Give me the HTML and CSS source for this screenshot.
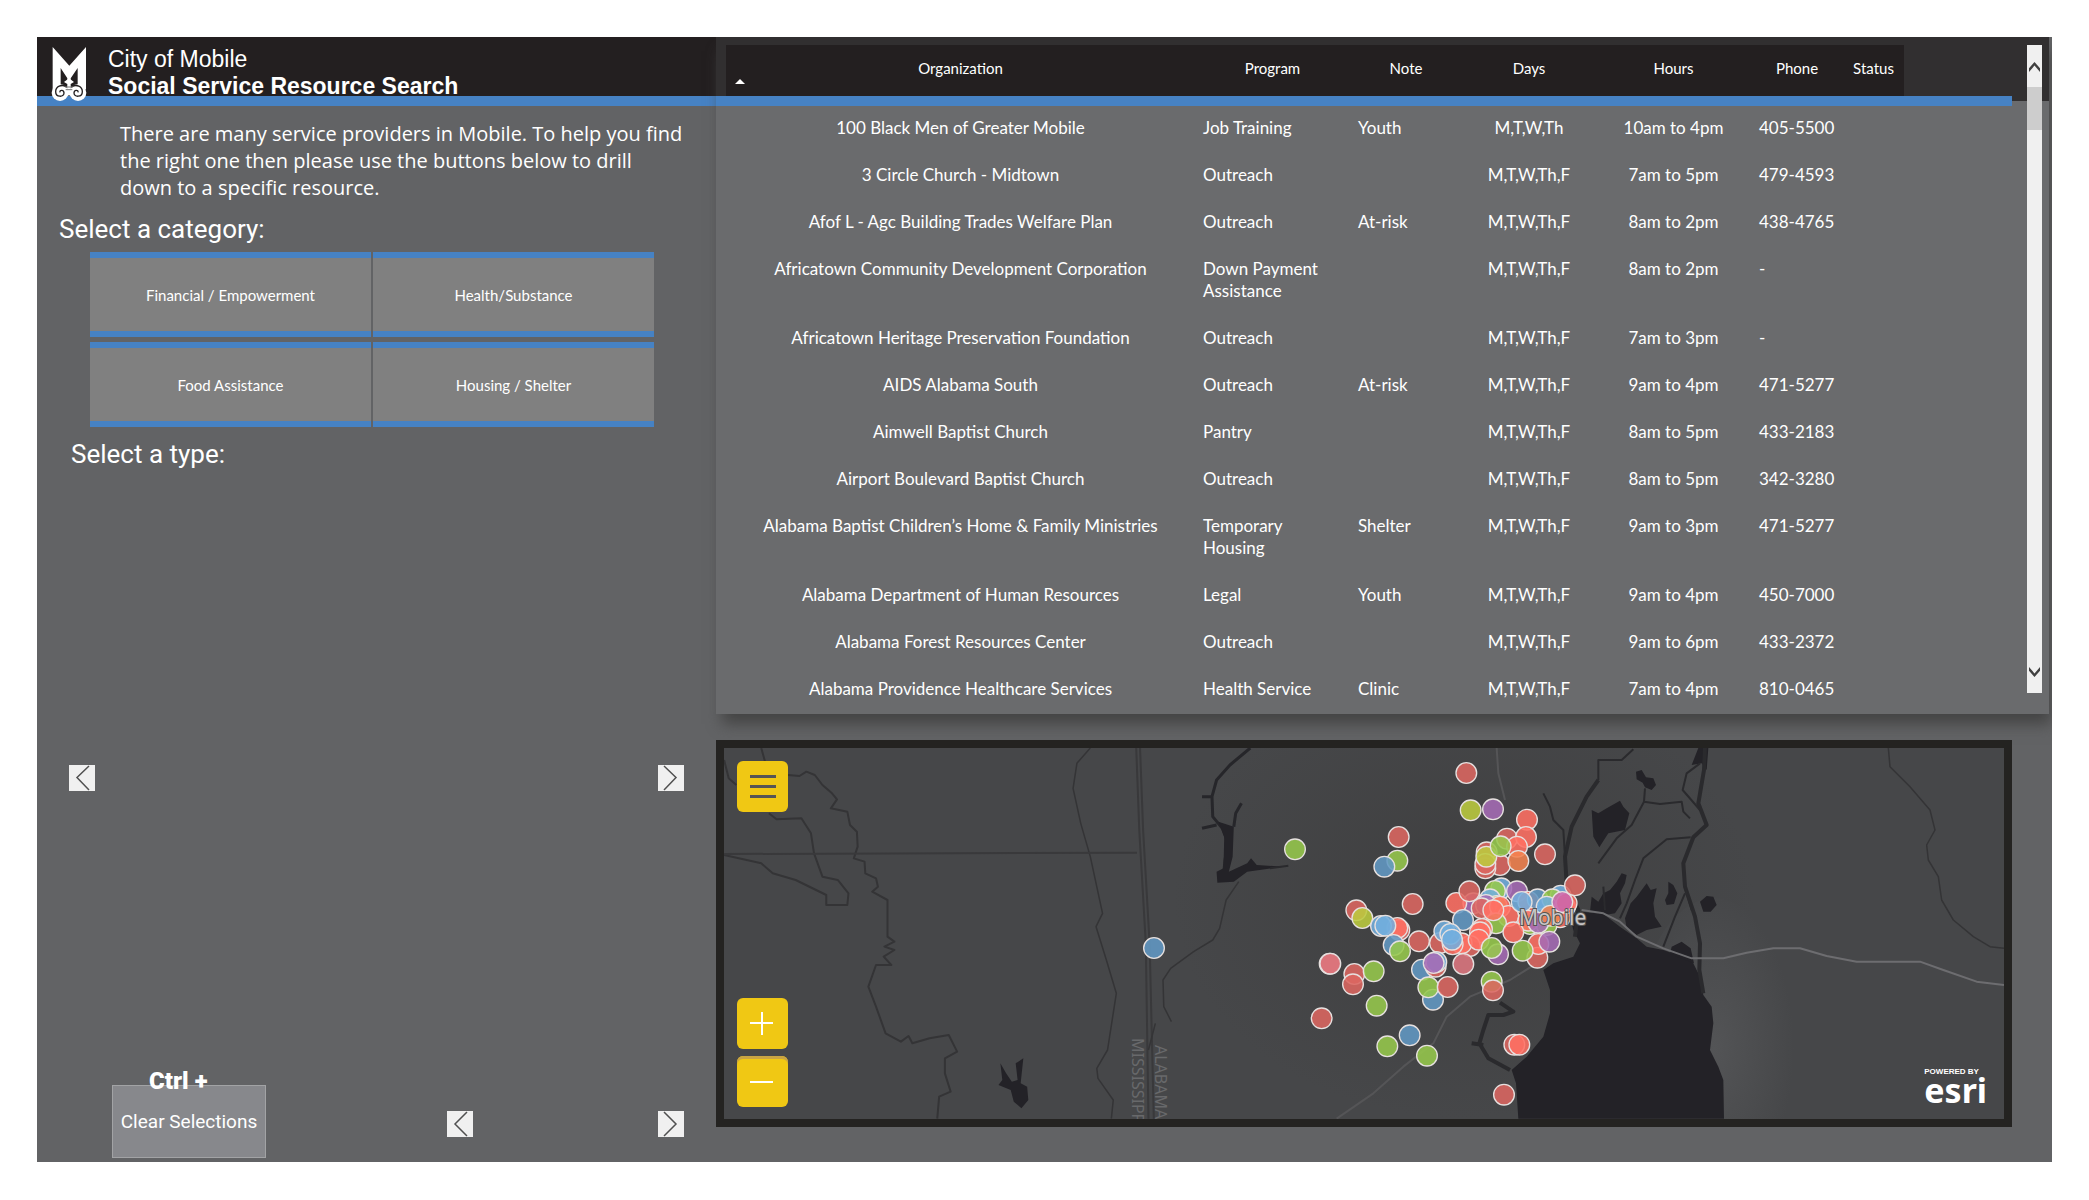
FILE: index.html
```html
<!DOCTYPE html>
<html lang="en">
<head>
<meta charset="utf-8">
<meta name="viewport" content="width=device-width, initial-scale=1">
<title>City of Mobile - Social Service Resource Search</title>
<link rel="stylesheet" href="styles.css">
</head>
<body>
<div class="dashboard">
  <div class="sidebar">
    <header class="brand">
      <svg class="brand-logo" viewBox="0 0 108 168" aria-hidden="true">
        <path fill="#fff" d="M5 3 55 59 105 3V130H5Z"/>
        <path fill="#231f20" d="M29 66 54 104 80 66V128H29Z"/>
        <circle cx="27" cy="140" r="25" fill="#fff"/>
        <circle cx="81" cy="140" r="25" fill="#fff"/>
        <path fill="#fff" d="M54 88 60 101 69 108 59 114 60 140 66 152 54 148 42 152 48 140 49 114 39 108 48 101Z"/>
        <path fill="none" stroke="#231f20" stroke-width="4" d="M45 122C32 114 14 121 14 137 14 154 39 155 39 141 39 131 25 131 27 139M63 122C76 114 94 121 94 137 94 154 69 155 69 141 69 131 83 131 81 139"/>
        <path stroke="#777" stroke-width="3" d="M42 123H66M44 131H64"/>
      </svg>
      <h1 class="brand-title">City of Mobile<strong>Social Service Resource Search</strong></h1>
    </header>
    <p class="intro">There are many service providers in Mobile. To help you find the right one then please use the buttons below to drill down to a specific resource.</p>
    <h2 class="heading">Select a category:</h2>
    <div class="categories">
      <button class="category" type="button">Financial / Empowerment</button>
      <button class="category" type="button">Health/Substance</button>
      <button class="category" type="button">Food Assistance</button>
      <button class="category" type="button">Housing / Shelter</button>
    </div>
    <h2 class="heading heading-type">Select a type:</h2>
    <div class="type-list"></div>
    <div class="pager">
      <button class="arrow" type="button" aria-label="Previous types"><svg viewBox="0 0 26 26"><path d="M20 1 8 12.500 20 25"/></svg></button>
      <button class="arrow" type="button" aria-label="Next types"><svg viewBox="0 0 26 26"><path d="M6 1 18 12.500 6 25"/></svg></button>
    </div>
    <div class="detail-list"></div>
    <div class="actions">
      <div class="clear">
        <span class="shortcut">Ctrl +</span>
        <button class="clear-button" type="button">Clear Selections</button>
      </div>
      <div class="pager pager-detail">
        <button class="arrow" type="button" aria-label="Previous"><svg viewBox="0 0 26 26"><path d="M20 1 8 13 20 25"/></svg></button>
        <button class="arrow" type="button" aria-label="Next"><svg viewBox="0 0 26 26"><path d="M6 1 18 13 6 25"/></svg></button>
      </div>
    </div>
  </div>

  <main class="content">
    <section class="results">
      <div class="results-body">
        <table class="results-table">
          <colgroup><col><col class="col-program"><col class="col-note"><col class="col-days"><col class="col-hours"><col class="col-phone"><col class="col-status"></colgroup>
          <thead>
            <tr><th aria-sort="ascending" class="sorted">Organization</th><th>Program</th><th>Note</th><th>Days</th><th>Hours</th><th>Phone</th><th>Status</th></tr>
          </thead>
          <tbody>
            <tr><td>100 Black Men of Greater Mobile</td><td>Job Training</td><td>Youth</td><td>M,T,W,Th</td><td>10am to 4pm</td><td>405-5500</td><td></td></tr>
            <tr><td>3 Circle Church - Midtown</td><td>Outreach</td><td></td><td>M,T,W,Th,F</td><td>7am to 5pm</td><td>479-4593</td><td></td></tr>
            <tr><td>Afof L - Agc Building Trades Welfare Plan</td><td>Outreach</td><td>At-risk</td><td>M,T,W,Th,F</td><td>8am to 2pm</td><td>438-4765</td><td></td></tr>
            <tr><td>Africatown Community Development Corporation</td><td>Down Payment Assistance</td><td></td><td>M,T,W,Th,F</td><td>8am to 2pm</td><td>-</td><td></td></tr>
            <tr><td>Africatown Heritage Preservation Foundation</td><td>Outreach</td><td></td><td>M,T,W,Th,F</td><td>7am to 3pm</td><td>-</td><td></td></tr>
            <tr><td>AIDS Alabama South</td><td>Outreach</td><td>At-risk</td><td>M,T,W,Th,F</td><td>9am to 4pm</td><td>471-5277</td><td></td></tr>
            <tr><td>Aimwell Baptist Church</td><td>Pantry</td><td></td><td>M,T,W,Th,F</td><td>8am to 5pm</td><td>433-2183</td><td></td></tr>
            <tr><td>Airport Boulevard Baptist Church</td><td>Outreach</td><td></td><td>M,T,W,Th,F</td><td>8am to 5pm</td><td>342-3280</td><td></td></tr>
            <tr><td>Alabama Baptist Children’s Home &amp; Family Ministries</td><td>Temporary Housing</td><td>Shelter</td><td>M,T,W,Th,F</td><td>9am to 3pm</td><td>471-5277</td><td></td></tr>
            <tr><td>Alabama Department of Human Resources</td><td>Legal</td><td>Youth</td><td>M,T,W,Th,F</td><td>9am to 4pm</td><td>450-7000</td><td></td></tr>
            <tr><td>Alabama Forest Resources Center</td><td>Outreach</td><td></td><td>M,T,W,Th,F</td><td>9am to 6pm</td><td>433-2372</td><td></td></tr>
            <tr><td>Alabama Providence Healthcare Services</td><td>Health Service</td><td>Clinic</td><td>M,T,W,Th,F</td><td>7am to 4pm</td><td>810-0465</td><td></td></tr>
          </tbody>
        </table>
      </div>
      <div class="scroll-side">
        <div class="scrollbar">
          <button class="scroll-button" type="button" aria-label="Scroll up"><svg viewBox="0 0 12 12"><path d="M0 8 6 1 12 8V12L6 5 0 12Z"/></svg></button>
          <div class="scroll-thumb"></div>
          <button class="scroll-button scroll-down" type="button" aria-label="Scroll down"><svg viewBox="0 0 12 12"><path d="M0 4 6 11 12 4V0L6 7 0 0Z"/></svg></button>
        </div>
      </div>
    </section>

    <section class="map" aria-label="Map of service providers">
      <svg class="map-canvas" viewBox="0 0 1280 371" preserveAspectRatio="xMidYMid slice">
        <defs>
          <radialGradient id="land"><stop offset="0" stop-color="#3f3f40"/><stop offset="1" stop-color="#464749"/></radialGradient>
          <radialGradient id="shore"><stop offset="0" stop-color="#535456"/><stop offset="1" stop-color="#464749"/></radialGradient>
        </defs>
        <rect width="1280" height="371" fill="#464749"/>
        <ellipse cx="740" cy="150" rx="290" ry="220" fill="url(#land)"/>
        <ellipse cx="990" cy="300" rx="80" ry="150" fill="url(#shore)"/>

        <g class="west" transform="translate(-24 -18) scale(.38265 .33333)">
          <path class="creek" d="M160 54 170 95M230 135 260 138 278 125 300 135 320 165 345 190 358 208 342 235 385 245 392 285 410 305 412 350 402 385 430 395 432 430 460 445 465 470 450 485 490 510 490 620 508 635 482 650 508 660 480 680 500 705 460 705 440 770 460 830 485 910 525 935 545 918 555 940 600 925 650 915 672 965 640 985 640 1030 655 1085 625 1100 620 1166"/>
          <path class="creek" d="M63 90 75 145 95 165M180 250 200 268 265 265 290 310 298 370 320 440 360 450 388 490 385 525 330 525 330 495 250 450 190 430 160 400 63 375"/>
          <path class="creek fine" d="M1020 54 985 100 975 175 995 280 1020 380 1052 550 1035 590 1062 690 1088 790 1065 960 1037 1015 1040 1045 1080 1110 1075 1166"/>
          <path class="border" d="M63 372 1142 368M1140 54 1148 300 1165 640 1172 1166M1150 54 1158 300 1175 640 1186 1166"/>
          <path class="creek fine" d="M1408 455 1375 510 1358 595 1340 630 1290 665 1230 715 1210 750 1212 830 1232 875M1190 880 1172 960"/>
          <path class="river" d="M1438 54 1385 105 1350 150 1338 200 1340 260 1365 295 1380 340 1372 390 1368 440M1395 290 1400 250 1415 220M1312 200H1338M1312 295 1350 285"/>
          <path class="lake" d="M1355 275 1395 290 1392 380 1382 425 1430 400 1440 385 1455 405 1525 410 1430 425 1395 455 1352 458 1350 425 1368 415 1370 320Z"/>
          <path class="lake" d="M785 1000 800 1030 815 1055 830 1050 825 1000 845 985 838 1060 855 1070 858 1110 840 1135 820 1115 812 1080 780 1065 790 1050Z"/>
        </g>

        <g transform="translate(546 -18) scale(.33333)">
          <path class="water" d="M900 560 935 545 1000 552 1050 590 1100 625 1130 650 1180 660 1265 690 1290 740 1300 795 1325 830 1330 880 1320 960 1345 1010 1360 1050 1362 1166H745L738 1060 725 1020 770 980 820 920 840 850 840 780 820 720 850 700 910 680 930 640 910 600Z"/>
          <path class="water" d="M965 240 985 250 1010 235 1050 212 1060 230 1078 250 1065 300 1015 310 988 352 970 320ZM1098 125 1115 120 1128 142 1150 145 1158 165 1145 180 1125 172 1118 158 1100 148Z"/>
          <path class="water" d="M965 500 985 515 1000 490 1020 480 1040 455 1055 430 1070 435 1065 460 1050 490 1055 520 1035 550 1000 556 960 545ZM1065 565 1082 520 1100 500 1130 460 1142 480 1160 475 1150 520 1155 560 1175 590 1130 600 1100 615 1070 595ZM1195 455 1210 465 1222 490 1212 522 1190 525 1185 510 1195 490ZM1290 515 1310 498 1330 500 1340 525 1322 545 1300 545ZM1205 650 1235 635 1262 655 1272 700 1200 672ZM1285 54H1315L1310 120 1295 100 1265 105Z"/>
          <path class="channel thick" d="M1305 54 1302 120 1285 220 1310 285 1270 322 1240 400 1245 470 1275 560 1290 640 1288 720 1300 790M985 150 950 200 905 290 885 380 890 460 925 540 915 620"/>
          <path class="channel" d="M1290 100 1250 130 1238 180 1290 240M1125 175 1122 215 1170 222 1235 215 1240 245 1260 265M1122 215 1085 285 1040 325 985 400M1262 322 1190 328 1120 385 1095 450 1070 520 1050 565M1090 58 1055 90H985V150M820 190 840 230 850 270 880 300 885 380M1245 490 1215 560 1180 650M0 415 55 407M1000 470 1005 540M1245 470 1265 540"/>
          <path class="channel thick" d="M690 818 730 845 700 855 655 855 640 900 628 940 655 985 720 1020M605 940 640 945"/>
          <path class="road" d="M935 540 1000 550 1050 575 1100 620 1180 655 1265 685H1360L1430 668 1510 655 1590 655 1670 678 1760 695H1950L2020 720 2120 755 2202 765"/>
          <path class="road faint" d="M800 700 720 750 600 800 530 860 490 940 400 1010 310 1090 200 1166M680 54 685 130 705 210"/>
          <path class="creek fine" d="M1855 54 1860 110 1920 170 1980 240 1995 300 1970 345 1975 390 2005 440 2015 510 2050 570 2110 620 2160 650 2202 655"/>

          <g class="pins">
            <circle class="red" cx="589" cy="129" r="31"/><circle class="lime" cx="602" cy="241" r="31"/><circle class="purple" cx="669" cy="238" r="31"/>
            <circle class="coral" cx="771" cy="269" r="31"/><circle class="red" cx="711" cy="326" r="31"/><circle class="coral" cx="768" cy="321" r="31"/>
            <circle class="coral" cx="741" cy="350" r="31"/><circle class="red" cx="650" cy="367" r="31"/><circle class="red" cx="690" cy="405" r="31"/>
            <circle class="red" cx="646" cy="415" r="31"/><circle class="red" cx="646" cy="402" r="31"/><circle class="lime" cx="649" cy="380" r="31"/>
            <circle class="green" cx="692" cy="349" r="31"/><circle class="orange" cx="745" cy="393" r="31"/><circle class="red" cx="825" cy="373" r="31"/>
            <circle class="red" cx="386" cy="321" r="31"/><circle class="green" cx="382" cy="392" r="31"/><circle class="blue" cx="343" cy="410" r="31"/>
            <circle class="green" cx="75" cy="358" r="31"/><circle class="red" cx="428" cy="522" r="31"/><circle class="red" cx="259" cy="541" r="31"/>
            <circle class="lime" cx="277" cy="564" r="31"/><circle class="purple" cx="610" cy="520" r="31"/><circle class="coral" cx="559" cy="519" r="31"/>
            <circle class="red" cx="598" cy="484" r="31"/><circle class="sky" cx="694" cy="475" r="31"/><circle class="green" cx="675" cy="483" r="31"/>
            <circle class="purple" cx="741" cy="484" r="31"/><circle class="sky" cx="660" cy="508" r="31"/><circle class="lime" cx="680" cy="528" r="31"/>
            <circle class="purple" cx="648" cy="525" r="31"/><circle class="red" cx="635" cy="535" r="31"/><circle class="coral" cx="690" cy="530" r="31"/>
            <circle class="coral" cx="715" cy="558" r="31"/><circle class="green" cx="678" cy="580" r="31"/><circle class="coral" cx="670" cy="541" r="31"/>
            <circle class="coral" cx="775" cy="515" r="31"/><circle class="blue" cx="803" cy="508" r="31"/><circle class="sky" cx="755" cy="516" r="31"/>
            <circle class="sky" cx="872" cy="497" r="31"/><circle class="green" cx="847" cy="508" r="31"/><circle class="sky" cx="830" cy="530" r="31"/>
            <circle class="coral" cx="885" cy="530" r="31"/><circle class="coral" cx="870" cy="562" r="31"/><circle class="green" cx="780" cy="582" r="31"/>
            <circle class="green" cx="830" cy="585" r="31"/><circle class="coral" cx="775" cy="572" r="31"/><circle class="purple" cx="805" cy="578" r="31"/>
            <circle class="coral" cx="890" cy="520" r="31"/><circle class="orange" cx="842" cy="557" r="31"/><circle class="pink" cx="877" cy="516" r="31"/>
            <circle class="red" cx="915" cy="466" r="31"/><circle class="red" cx="802" cy="683" r="31"/><circle class="coral" cx="805" cy="642" r="31"/>
            <circle class="purple" cx="838" cy="635" r="31"/><circle class="green" cx="758" cy="662" r="31"/><circle class="coral" cx="730" cy="607" r="31"/>
            <circle class="coral" cx="636" cy="597" r="31"/><circle class="coral" cx="630" cy="607" r="31"/><circle class="blue" cx="579" cy="570" r="31"/>
            <circle class="red" cx="600" cy="648" r="31"/><circle class="coral" cx="575" cy="640" r="31"/><circle class="red" cx="510" cy="639" r="31"/>
            <circle class="coral" cx="548" cy="643" r="31"/><circle class="sky" cx="523" cy="604" r="31"/><circle class="sky" cx="541" cy="612" r="31"/>
            <circle class="sky" cx="546" cy="629" r="31"/><circle class="coral" cx="626" cy="629" r="31"/><circle class="purple" cx="684" cy="673" r="31"/>
            <circle class="green" cx="665" cy="654" r="31"/><circle class="red" cx="447" cy="634" r="31"/><circle class="red" cx="388" cy="600" r="31"/>
            <circle class="coral" cx="382" cy="594" r="31"/><circle class="sky" cx="333" cy="588" r="31"/><circle class="sky" cx="346" cy="587" r="31"/>
            <circle class="blue" cx="371" cy="645" r="31"/><circle class="green" cx="390" cy="664" r="31"/><circle class="red" cx="179" cy="701" r="31"/>
            <circle class="rose" cx="181" cy="701" r="31"/><circle class="red" cx="253" cy="732" r="31"/><circle class="red" cx="249" cy="763" r="31"/>
            <circle class="green" cx="311" cy="724" r="31"/><circle class="green" cx="320" cy="827" r="31"/><circle class="red" cx="155" cy="865" r="31"/>
            <circle class="blue" cx="456" cy="719" r="31"/><circle class="red" cx="497" cy="710" r="31"/><circle class="sky" cx="499" cy="696" r="31"/>
            <circle class="purple" cx="491" cy="699" r="31"/><circle class="rose" cx="580" cy="702" r="31"/><circle class="blue" cx="489" cy="809" r="31"/>
            <circle class="green" cx="475" cy="772" r="31"/><circle class="red" cx="533" cy="771" r="31"/><circle class="green" cx="665" cy="755" r="31"/>
            <circle class="red" cx="669" cy="781" r="31"/><circle class="blue" cx="419" cy="916" r="31"/><circle class="green" cx="352" cy="949" r="31"/>
            <circle class="green" cx="471" cy="977" r="31"/><circle class="red" cx="733" cy="944" r="31"/><circle class="coral" cx="748" cy="944" r="31"/>
            <circle class="red" cx="702" cy="1094" r="31"/><circle class="blue" cx="-348" cy="654" r="31"/>
          </g>
        </g>
        <text class="city" x="795" y="177">Mobile</text>
        <text class="state" transform="translate(408 290) rotate(90)">MISSISSIPPI</text>
        <text class="state" transform="translate(431 297) rotate(90)">ALABAMA</text>
      </svg>
      <button class="map-button map-menu" type="button" aria-label="Menu"><svg viewBox="0 0 51 51"><path d="M13 15.500H39M13 25.500H39M13 35.500H39"/></svg></button>
      <div class="map-zoom">
        <button class="map-button" type="button" aria-label="Zoom in"><svg viewBox="0 0 51 51"><path d="M13 25H36M25 14V37"/></svg></button>
        <button class="map-button zoom-out" type="button" aria-label="Zoom out"><svg viewBox="0 0 51 51"><path d="M13 26H36"/></svg></button>
      </div>
      <a class="esri" href="#"><small>POWERED BY</small>esri</a>
    </section>
  </main>
</div>
</body>
</html>
```

FILE: styles.css
```css
* {
  box-sizing: border-box;
}

body {
  margin: 0;
  padding: 37px;
  background: #fff;
  color: #fff;
  font-family: Lato, "Liberation Sans", sans-serif;
}

button {
  margin: 0;
  padding: 0;
  border: 0;
  color: inherit;
  font: inherit;
  cursor: pointer;
}

.dashboard {
  display: grid;
  grid-template-columns: 679fr 1336fr;
  min-height: calc(100vh - 75px);
  background: #626365;
  overflow: hidden;
}

/* Left column */
.sidebar {
  display: flex;
  flex-direction: column;
}

.brand {
  display: flex;
  align-items: flex-start;
  gap: 21px;
  height: 69px;
  padding: 9px 14px 0;
  background: #231f20;
  border-bottom: 10px solid #4682c4;
}

.brand-logo {
  flex: none;
  width: 36px;
  height: 56px;
}

.brand-title {
  margin: 0;
  font: 400 23px/27px "Liberation Sans", Arial, sans-serif;
}

.brand-title strong {
  display: block;
}

.intro {
  max-width: 650px;
  margin: 14px 0 0;
  padding-left: 83px;
  font: 400 20px/27px "Open Sans", "Noto Sans", sans-serif;
}

.heading {
  margin: 12px 0 7px 22px;
  font: 400 26px/32px Roboto, sans-serif;
}

.heading-type {
  margin: 11px 0 0 34px;
}

.categories {
  display: grid;
  grid-template-columns: 1fr 1fr;
  gap: 5px 2px;
  margin: 0 62px 0 53px;
}

.category {
  height: 85px;
  background: #808080;
  border-top: 6px solid #4682c4;
  border-bottom: 6px solid #4682c4;
  font-size: 15px;
}

.type-list {
  flex: 15;
}

.detail-list {
  flex: 14;
}

.pager {
  display: flex;
  justify-content: space-between;
  padding: 0 32px;
}

.arrow {
  width: 26px;
  height: 26px;
  background: #f0f0f0;
}

.arrow svg {
  display: block;
  fill: none;
  stroke: #505050;
  stroke-width: 1.5;
}

.actions {
  display: flex;
  align-items: flex-end;
  justify-content: space-between;
  padding: 0 0 4px 75px;
}

.clear {
  display: flex;
  flex-direction: column;
}

.shortcut {
  z-index: 1;
  margin: 0 0 -10px 37px;
  font: 900 24px/28px Roboto, sans-serif;
}

.clear-button {
  width: 154px;
  height: 73px;
  background: #87888c;
  border: 1px solid #a2a3a5;
  font: 400 19px/24px Roboto, sans-serif;
}

.pager-detail {
  width: 269px;
  margin-bottom: 21px;
  padding: 0 32px 0 0;
}

/* Right column */
.content {
  display: flex;
  flex-direction: column;
  gap: 26px;
  padding-bottom: 35px;
}

.results {
  display: flex;
  height: 677px;
  margin-right: 3px;
  background: linear-gradient(#312f30 64px, #6a6b6d 64px);
  box-shadow: 4px 12px 14px -2px #444;
}

.results-body {
  flex: 1;
  padding: 8px 108px 0 10px;
  overflow: hidden;
  background: linear-gradient(transparent 59px, #4682c4 59px, #4682c4 69px, #6a6b6d 69px);
}

.results-table {
  width: 100%;
  table-layout: fixed;
  border-collapse: collapse;
}

.col-program { width: 155px; }
.col-note { width: 112px; }
.col-days { width: 134px; }
.col-hours { width: 155px; }
.col-phone { width: 92px; }
.col-status { width: 61px; }

th {
  height: 61px;
  padding: 0 0 16px;
  background: linear-gradient(#231f20 51px, transparent 51px);
  font-size: 15px;
  font-weight: 400;
}

.sorted {
  position: relative;
}

.sorted::before {
  content: "";
  position: absolute;
  left: 9px;
  top: 34px;
  border: solid transparent;
  border-width: 0 5px 5px;
  border-bottom-color: #fff;
}

td {
  padding: 11px 0 14px;
  font-size: 17px;
  line-height: 22px;
  text-align: center;
  vertical-align: top;
}

td:nth-child(2),
td:nth-child(3),
td:nth-child(6) {
  padding-left: 8px;
  text-align: left;
}

td:nth-child(2) {
  padding-right: 20px;
}

.scroll-side {
  width: 37px;
  padding: 8px 7px 21px 15px;
}

.scrollbar {
  display: flex;
  flex-direction: column;
  height: 100%;
  background: #f0f0f0;
}

.scroll-button {
  display: grid;
  place-items: center;
  width: 100%;
  height: 42px;
  background: none;
}

.scroll-button svg {
  width: 11px;
  fill: #404040;
}

.scroll-thumb {
  height: 43px;
  background: #cdcdcd;
}

.scroll-down {
  margin-top: auto;
}

/* Map */
.map {
  position: relative;
  flex: 1;
  min-height: 300px;
  margin-right: 40px;
  border: 8px solid #242321;
  overflow: hidden;
}

.map-canvas {
  position: absolute;
  width: 100%;
  height: 100%;
}

.map-canvas path {
  vector-effect: non-scaling-stroke;
  stroke-linejoin: round;
}

.creek { fill: none; stroke: #343436; stroke-width: 2; }
.fine { stroke-width: 1.5; }
.border { fill: none; stroke: #39393b; stroke-width: 2; }
.river { fill: none; stroke: #26262a; stroke-width: 3; }
.lake, .water { fill: #232227; }
.channel { fill: none; stroke: #2a2a2d; stroke-width: 2; }
.thick { stroke-width: 4; }
.road { fill: none; stroke: #6d6d70; stroke-width: 2; }
.faint { stroke: #555557; }

.pins circle {
  fill-opacity: .88;
  stroke: #e6e0df;
  stroke-width: 4;
}

.red { fill: #dc6661; }
.coral { fill: #ff6f63; }
.rose { fill: #dd7680; }
.orange { fill: #f2824f; }
.lime { fill: #bccb3f; }
.green { fill: #96c84c; }
.blue { fill: #6298c4; }
.sky { fill: #72aede; }
.purple { fill: #a56bb5; }
.pink { fill: #cb67ac; }

.city {
  fill: #c8c5c6;
  stroke: #555;
  stroke-width: 2;
  paint-order: stroke;
  font: 21px "Noto Sans", sans-serif;
}

.state {
  fill: #68696b;
  font: 16px "Noto Sans", sans-serif;
}

.map-button {
  display: block;
  width: 51px;
  height: 51px;
  background: #f0c814;
  border-radius: 6px;
}

.map-button svg {
  display: block;
  stroke: #fff;
  stroke-width: 2;
}

.map-menu {
  position: absolute;
  left: 13px;
  top: 13px;
}

.map-menu svg {
  stroke: #555;
  stroke-width: 3;
}

.map-zoom {
  position: absolute;
  left: 13px;
  bottom: 12px;
  display: grid;
  gap: 7px;
}

.zoom-out {
  box-shadow: inset 0 3px #c9a443;
}

.esri {
  position: absolute;
  right: 17px;
  bottom: 15px;
  color: #fff;
  font: 700 34px/28px "Noto Sans", sans-serif;
  text-decoration: none;
}

.esri small {
  display: block;
  font: 700 8px/8px "Liberation Sans", sans-serif;
}
```
